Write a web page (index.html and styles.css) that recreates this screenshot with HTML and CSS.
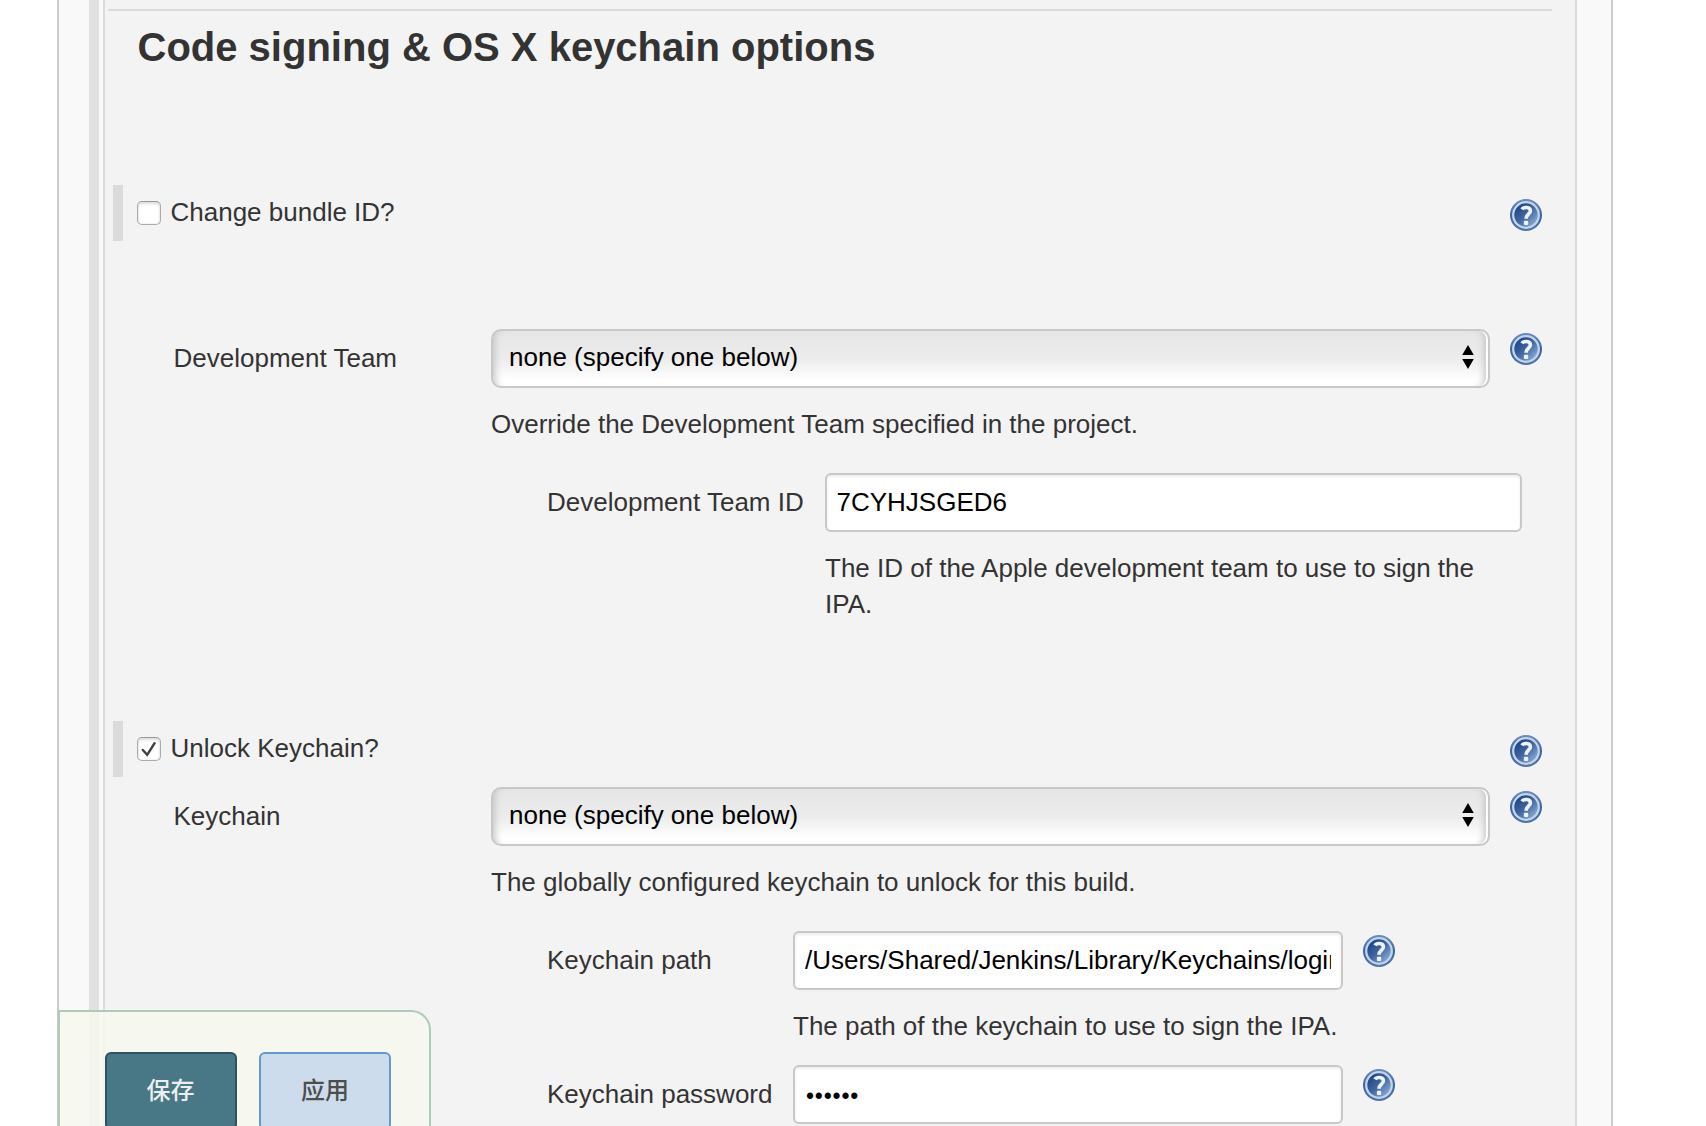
FILE: index.html
```html
<!DOCTYPE html>
<html lang="zh-CN">
<head>
<meta charset="utf-8">
<title>Code signing &amp; OS X keychain options</title>
<link rel="stylesheet" href="styles.css">
</head>
<body>
<svg class="defs" aria-hidden="true">
  <defs>
    <linearGradient id="ball" x1="0" y1="0" x2="1" y2="1">
      <stop offset="0.15" stop-color="#1c4585"/>
      <stop offset="0.5" stop-color="#4267a0"/>
      <stop offset="0.9" stop-color="#8fb2dc"/>
    </linearGradient>
    <linearGradient id="rim" x1="0" y1="0" x2="0" y2="1">
      <stop offset="0" stop-color="#6a8dbd"/>
      <stop offset="0.5" stop-color="#3a64a0"/>
      <stop offset="1" stop-color="#5076aa"/>
    </linearGradient>
    <symbol id="help" viewBox="0 0 32 32">
      <circle cx="16" cy="16" r="16" fill="url(#rim)"/>
      <circle cx="16" cy="16" r="12.8" fill="url(#ball)" stroke="#c3d3e9" stroke-width="2.3"/>
      <path d="M12 10.4C13.2 8.2 20.4 7.2 20.4 12C20.4 15.2 16 15.4 16 19.8" fill="none" stroke="#eef3fa" stroke-width="3.6"/>
      <rect x="13.9" y="21.8" width="4.3" height="4.3" rx="1" fill="#eef3fa"/>
    </symbol>
    <symbol id="arrows" viewBox="0 0 12 24">
      <path d="M6 0L11.8 10H.2zM6 24L11.8 14H.2z"/>
    </symbol>
  </defs>
</svg>
<main class="outer">
  <div class="bar"></div>
  <section class="panel">
    <hr class="rule">
    <h1 class="title">Code signing &amp; OS X keychain options</h1>

    <div class="option option-bundle">
      <span class="check"></span>
      <span class="option-text">Change bundle ID?</span>
      <svg class="help"><use href="#help"/></svg>
    </div>

    <div class="field">
      <span class="label">Development Team</span>
      <div class="select"><span>none (specify one below)</span><svg class="arrows"><use href="#arrows"/></svg></div>
      <svg class="help"><use href="#help"/></svg>
    </div>
    <p class="note">Override the Development Team specified in the project.</p>

    <div class="field sub team">
      <span class="label">Development Team ID</span>
      <input class="input" type="text" value="7CYHJSGED6">
    </div>
    <p class="note team-note">The ID of the Apple development team to use to sign the IPA.</p>

    <div class="option">
      <span class="check"><svg class="tick" viewBox="0 0 24 24"><path d="M5.8 13L10.2 17.8L17.6 6.2"/></svg></span>
      <span class="option-text">Unlock Keychain?</span>
      <svg class="help"><use href="#help"/></svg>
    </div>
    <div class="field keychain">
      <span class="label">Keychain</span>
      <div class="select"><span>none (specify one below)</span><svg class="arrows"><use href="#arrows"/></svg></div>
      <svg class="help"><use href="#help"/></svg>
    </div>
    <p class="note">The globally configured keychain to unlock for this build.</p>

    <div class="field sub">
      <span class="label">Keychain path</span>
      <input class="input" type="text" value="/Users/Shared/Jenkins/Library/Keychains/login.keychain">
      <svg class="help"><use href="#help"/></svg>
    </div>
    <p class="note path-note">The path of the keychain to use to sign the IPA.</p>
    <div class="field sub">
      <span class="label">Keychain password</span>
      <input class="input dots" type="text" value="••••••">
      <svg class="help"><use href="#help"/></svg>
    </div>
  </section>
</main>
<div class="sticker">
  <button class="btn save">保存</button>
  <button class="btn apply">应用</button>
</div>
</body>
</html>
```
FILE: styles.css
```css
* { box-sizing: border-box; }
html, body { height: 1126px; overflow: hidden; }
body {
  margin: 0;
  background: #fff;
  color: #333;
  font: 26px/36px "Liberation Sans", "Noto Sans CJK SC", sans-serif;
}
.defs { position: absolute; width: 0; height: 0; }
.outer {
  display: flex;
  width: 1556px;
  height: 1126px;
  margin-left: 57px;
  padding-left: 30px;
  border: solid #ccc;
  border-width: 0 2px;
  background: #f9f9f9;
}
.bar { width: 10px; margin-right: 4px; background: #e1e1e1; }
.panel {
  width: 1474px;
  border: solid #dbdbdb;
  border-width: 0 2px;
  background: #f3f3f3;
}
.rule { width: 1444px; height: 2px; margin: 9px 0 0 3px; border: 0; background: #dbdbdb; }
.title { height: 174px; margin: 0; padding: 13px 0 0 32.5px; font-size: 40px; line-height: 46px; }
.option {
  display: flex;
  align-items: flex-start;
  height: 56px;
  margin-left: 8px;
  border-left: 10px solid #dbdbdb;
  padding-left: 14px;
}
.option-bundle { margin-bottom: 88px; }
.check {
  width: 24px;
  height: 24px;
  margin: 16px 9.5px 0 0;
  border: 1px solid #aaa;
  border-top-color: #999;
  border-radius: 5px;
  background: #fff;
  box-shadow: inset 0 2px 3px #ddd, inset 0 0 2px #ddd;
}
.tick { display: block; width: 24px; height: 24px; margin: -1px; fill: none; stroke: #404040; stroke-width: 2.5; stroke-linecap: round; }
.option-text { width: 1339.5px; padding-top: 9px; }
.option .help { margin-top: 14px; }
.help { flex: none; width: 32px; height: 32px; }
.field { display: flex; align-items: flex-start; height: 59px; }
.label { flex: none; width: 386px; padding: 11px 0 0 68.5px; white-space: nowrap; }
.field .help { margin: 4px 0 0 20px; }
.select {
  display: flex;
  justify-content: space-between;
  width: 999px;
  height: 59px;
  padding: 8px 14px 0 16px;
  border: 2px solid #c8c8c8;
  border-radius: 10px;
  background: linear-gradient(#e6e6e6, #ececec 50%, #fff 90%);
  box-shadow: inset 8px 0 7px -6px #c6c6c6, inset -2px 0 0 #fff, inset -10px 0 7px -6px #c6c6c6;
  color: #000;
}
.arrows { width: 12px; height: 24px; margin-top: 6px; }
.note { margin: 18px 0 31px 386px; }
.sub .label { width: 688px; padding-left: 442px; }
.input {
  width: 550px;
  height: 59px;
  padding: 0 10px 1px;
  border: 2px solid #c8c8c8;
  border-radius: 6px;
  background: #fff;
  box-shadow: inset 0 2px 3px #eee;
  color: #000;
  font: inherit;
}
.dots { padding: 3px 11px 0; font-size: 23px; letter-spacing: .8px; }
.team .label { width: 720px; }
.team .input { width: 697px; padding-left: 9.5px; }
.team-note { width: 670px; margin: 18px 0 99px 720px; }
.keychain { margin-top: 10px; }
.path-note { margin: 18px 0 21px 688px; }
.sticker {
  position: absolute;
  left: 58px;
  top: 1010px;
  display: flex;
  gap: 22px;
  width: 373px;
  height: 116px;
  padding: 40px 0 0 45px;
  border: 2px solid #a9cdb8;
  border-bottom: 0;
  border-top-right-radius: 20px;
  background: rgba(246, 248, 239, .9);
  overflow: hidden;
}
.btn {
  flex: none;
  width: 132px;
  height: 78px;
  padding: 0 0 5px;
  border: 2px solid #2f5260;
  border-radius: 6px;
  background: #487785;
  color: #eee;
  font: 500 24px/36px "Noto Sans CJK SC", sans-serif;
}
.save { padding-right: 1px; }
.apply { border-color: #6399cf; background: #cddcec; color: #4d4d4d; }
```
